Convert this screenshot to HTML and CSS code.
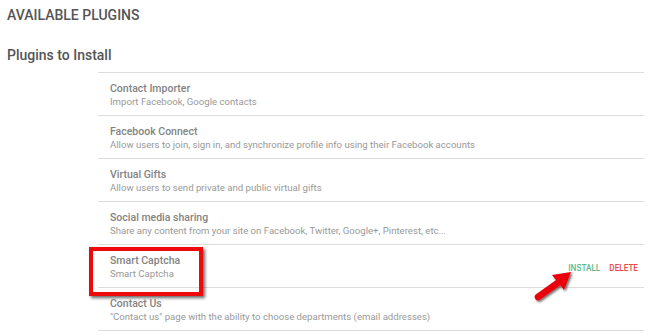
FILE: index.html
```html
<!DOCTYPE html>
<html lang="en">
<head>
    <meta charset="UTF-8">
    <title>Available Plugins</title>
    <link rel="stylesheet" href="styles.css">
</head>
<body>
    <div class="page">
        <h1 class="page-title">AVAILABLE PLUGINS</h1>
        <h2 class="section-title">Plugins to Install</h2>

        <ul class="plugin-list">
            <li class="plugin">
                <div class="plugin-info">
                    <div class="plugin-name">Contact Importer</div>
                    <div class="plugin-desc">Import Facebook, Google contacts</div>
                </div>
            </li>
            <li class="plugin">
                <div class="plugin-info">
                    <div class="plugin-name">Facebook Connect</div>
                    <div class="plugin-desc">Allow users to join, sign in, and synchronize profile info using their Facebook accounts</div>
                </div>
            </li>
            <li class="plugin">
                <div class="plugin-info">
                    <div class="plugin-name">Virtual Gifts</div>
                    <div class="plugin-desc">Allow users to send private and public virtual gifts</div>
                </div>
            </li>
            <li class="plugin">
                <div class="plugin-info">
                    <div class="plugin-name">Social media sharing</div>
                    <div class="plugin-desc">Share any content from your site on Facebook, Twitter, Google+, Pinterest, etc...</div>
                </div>
            </li>
            <li class="plugin highlighted">
                <div class="plugin-info">
                    <div class="plugin-name">Smart Captcha</div>
                    <div class="plugin-desc">Smart Captcha</div>
                </div>
                <div class="plugin-actions">
                    <a href="#" class="action install">Install</a>
                    <a href="#" class="action delete">Delete</a>
                </div>
                <!-- annotation overlays -->
                <div class="callout-box"></div>
                <svg class="callout-arrow" width="46" height="36" viewBox="0 0 46 36">
                    <defs>
                        <filter id="arrow-shadow" x="-20%" y="-20%" width="150%" height="150%">
                            <feDropShadow dx="1.5" dy="1.5" stdDeviation="1" flood-color="#000" flood-opacity="0.6"/>
                        </filter>
                    </defs>
                    <g filter="url(#arrow-shadow)">
                        <line x1="5" y1="27" x2="26" y2="12" stroke="#ea0008" stroke-width="6.5" stroke-linecap="round"/>
                        <polygon points="38,2 19,5 31,20" fill="#ea0008"/>
                    </g>
                </svg>
            </li>
            <li class="plugin">
                <div class="plugin-info">
                    <div class="plugin-name">Contact Us</div>
                    <div class="plugin-desc">"Contact us" page with the ability to choose departments (email addresses)</div>
                </div>
            </li>
        </ul>
    </div>
</body>
</html>
```

FILE: styles.css
```css
body {
    margin: 0;
    background: #fff;
    font-family: Roboto, "Liberation Sans", sans-serif;
}
.page {
    padding: 6px 6px 0 7px;
}
.page-title {
    margin: 0;
    font-size: 14px;
    font-weight: 500;
    line-height: 18px;
    color: #555;
}
.section-title {
    margin: 21px 0 0;
    font-size: 14px;
    font-weight: 500;
    line-height: 20px;
    color: #555;
}
.plugin-list {
    list-style: none;
    margin: 7px 0 0 91px;
    padding: 0;
    border-top: 1px solid #ddd;
}
.plugin {
    position: relative;
    display: flex;
    align-items: center;
    justify-content: space-between;
    padding: 9px 6px 7px 12px;
    border-bottom: 1px solid #ddd;
}
.plugin-name {
    font-size: 10.5px;
    font-weight: 500;
    line-height: 13px;
    color: #838383;
}
.plugin-desc {
    font-size: 9.6px;
    line-height: 13px;
    color: #999;
}
.plugin-actions {
    display: flex;
    gap: 9px;
    padding-top: 2px;
}
.action {
    font-size: 8.2px;
    font-weight: 500;
    text-transform: uppercase;
    text-decoration: none;
}
.action.install {
    color: #5cb88a;
}
.action.delete {
    color: #f04848;
}
.callout-box {
    position: absolute;
    left: -9px;
    top: 2px;
    width: 114px;
    height: 49px;
    box-sizing: border-box;
    border: 4px solid #ee0a0a;
    box-shadow: 2px 2px 3px rgba(0, 0, 0, 0.6);
}
.callout-arrow {
    position: absolute;
    left: 435px;
    top: 25px;
}
```
